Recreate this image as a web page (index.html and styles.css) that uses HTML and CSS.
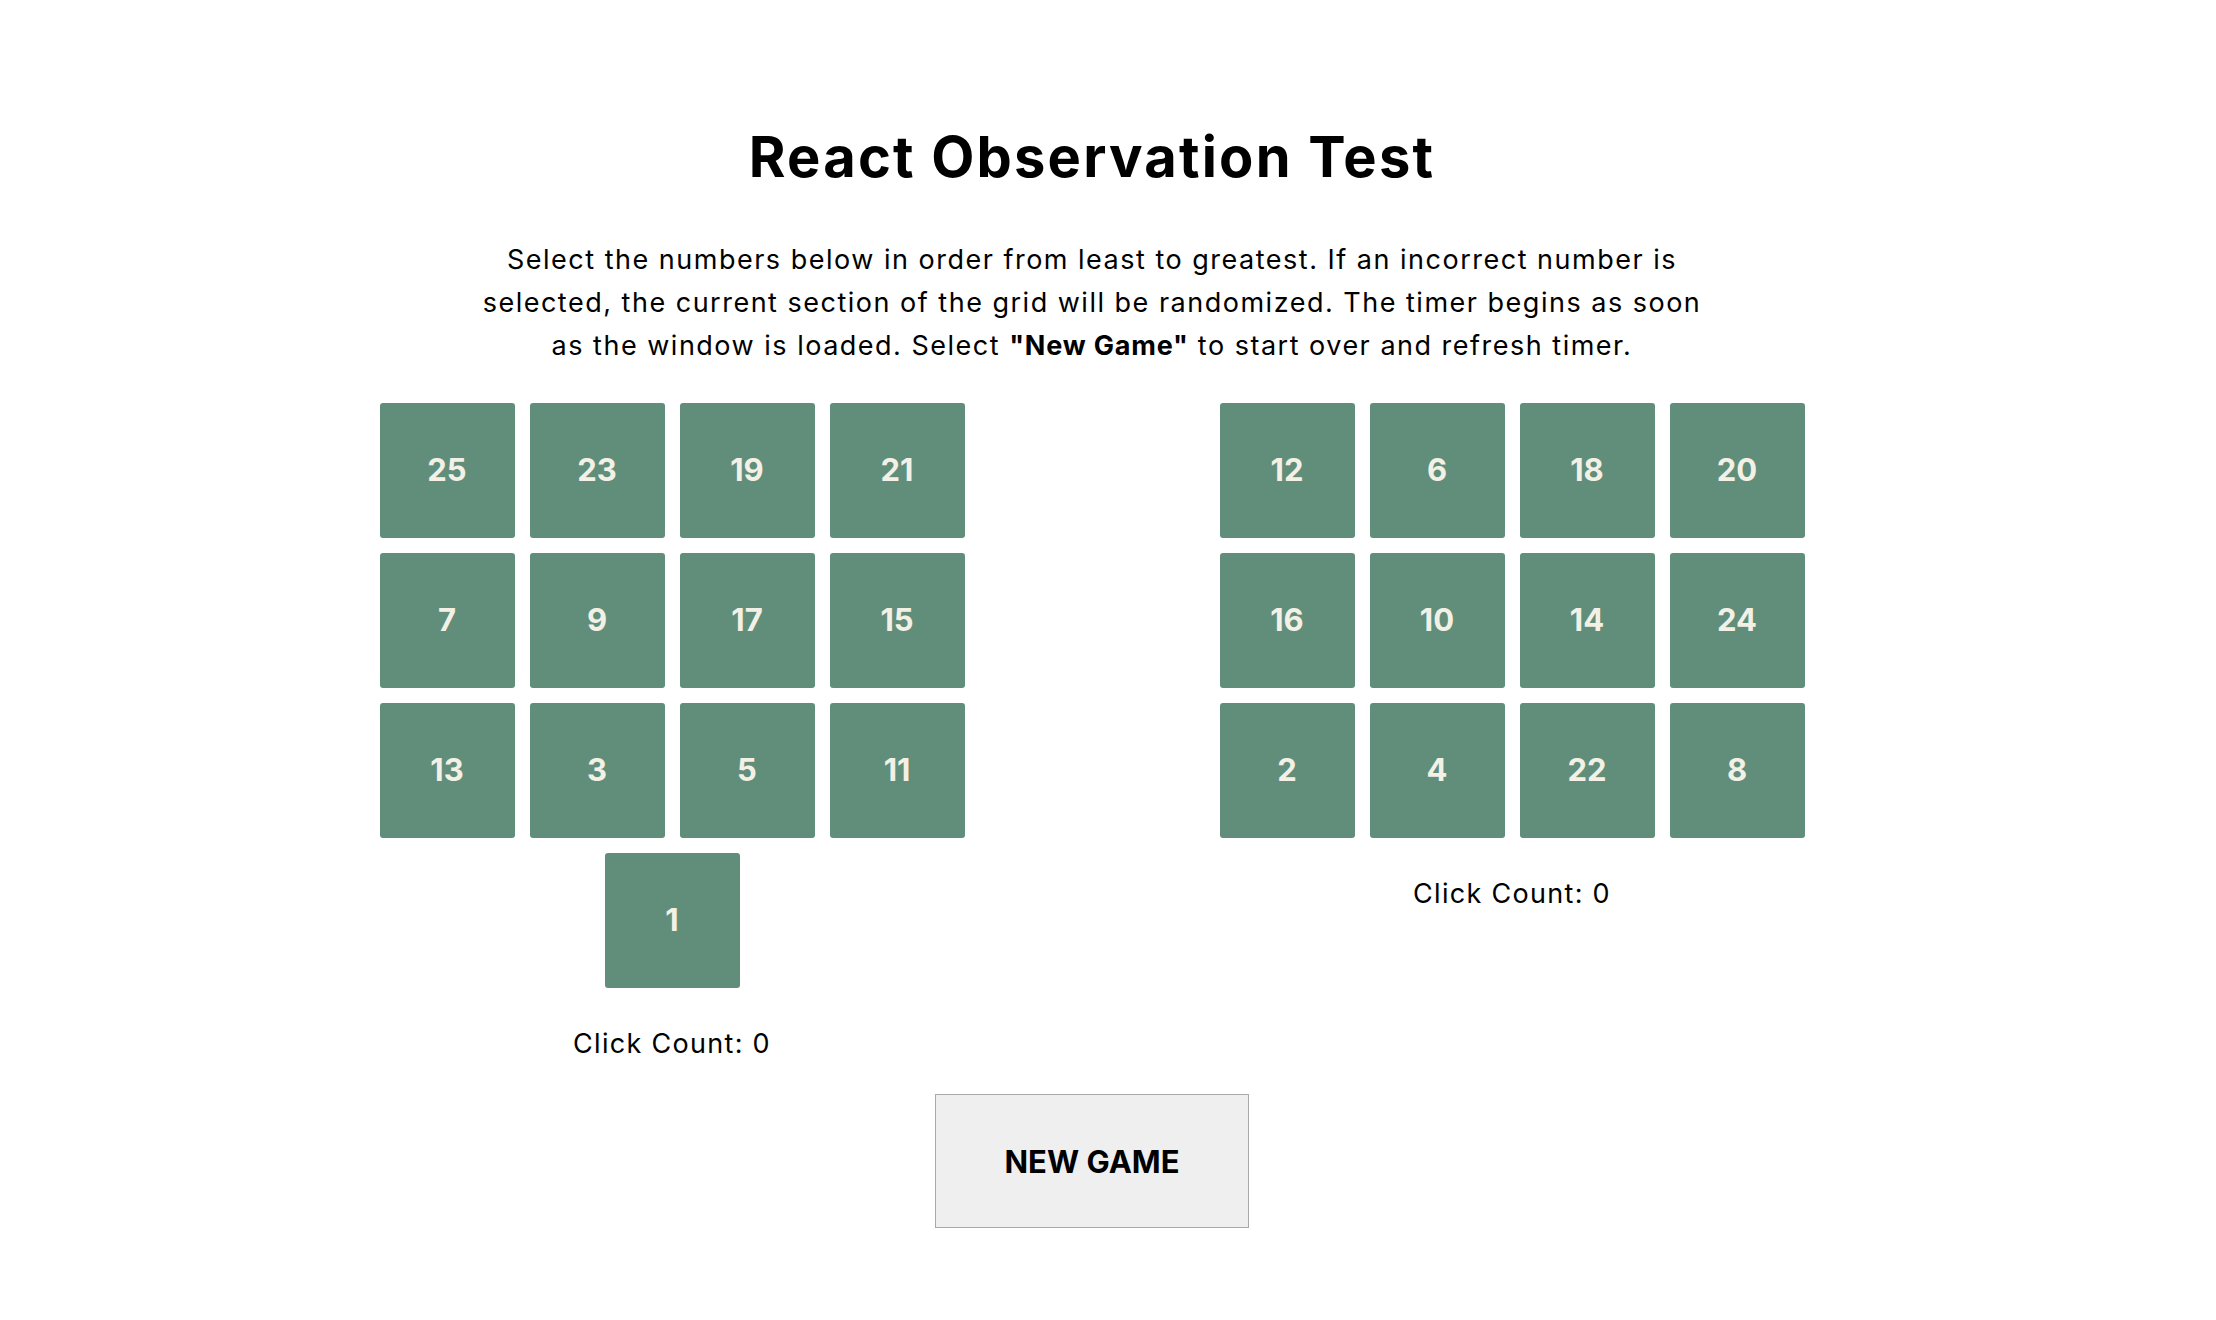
FILE: index.html
```html
<!DOCTYPE html>
<html lang="en">
<head>
<meta charset="utf-8">
<title>React Observation Test</title>
<link rel="stylesheet" href="styles.css">
</head>
<body>
<main class="page">
  <h1 class="title">React Observation Test</h1>
  <p class="intro">
    <span class="line l1">Select the numbers below in order from least to greatest. If an incorrect number is</span>
    <span class="line l2">selected, the current section of the grid will be randomized. The timer begins as soon</span>
    <span class="line l3">as the window is loaded. Select <strong>"New Game"</strong> to start over and refresh timer.</span>
  </p>
  <div class="boards">
    <section class="board">
      <div class="grid">
        <button class="tile">25</button><button class="tile">23</button><button class="tile">19</button><button class="tile">21</button>
        <button class="tile">7</button><button class="tile">9</button><button class="tile">17</button><button class="tile">15</button>
        <button class="tile">13</button><button class="tile">3</button><button class="tile">5</button><button class="tile">11</button>
        <button class="tile">1</button>
      </div>
      <p class="count">Click Count: 0</p>
    </section>
    <section class="board">
      <div class="grid">
        <button class="tile">12</button><button class="tile">6</button><button class="tile">18</button><button class="tile">20</button>
        <button class="tile">16</button><button class="tile">10</button><button class="tile">14</button><button class="tile">24</button>
        <button class="tile">2</button><button class="tile">4</button><button class="tile">22</button><button class="tile">8</button>
      </div>
      <p class="count">Click Count: 0</p>
    </section>
  </div>
  <div class="actions">
    <button class="new-game">NEW GAME</button>
  </div>
</main>
</body>
</html>
```

FILE: styles.css
```css
* { box-sizing: border-box; }

html, body {
  margin: 0;
  padding: 0;
  background: #ffffff;
}

body {
  font-family: Inter, "Noto Sans", sans-serif;
  color: #000000;
}

.page {
  width: 2184px;
  padding-top: 123px;
  display: flex;
  flex-direction: column;
  align-items: center;
}

.title {
  margin: 0;
  font-size: 56px;
  line-height: 68px;
  font-weight: 700;
  letter-spacing: 2.2px;
  text-align: center;
}

.intro {
  margin: 47px 0 0;
  font-size: 27px;
  line-height: 43px;
  font-weight: 400;
  letter-spacing: 1.5px;
  text-align: center;
  display: flex;
  flex-direction: column;
  align-items: center;
}

.intro strong { font-weight: 700; letter-spacing: 0.8px; }

.line { display: block; white-space: nowrap; }

.boards {
  margin-top: 36px;
  display: flex;
  align-items: flex-start;
  gap: 255px;
}

.board {
  width: 585px;
  display: flex;
  flex-direction: column;
  align-items: center;
}

.grid {
  width: 585px;
  display: flex;
  flex-wrap: wrap;
  justify-content: center;
  gap: 15px;
}

.tile {
  width: 135px;
  height: 135px;
  margin: 0;
  padding: 0 0 2px;
  border: none;
  border-radius: 3px;
  background: #618e7a;
  color: #f3f1e6;
  font-family: Inter, "Noto Sans", sans-serif;
  font-size: 31px;
  font-weight: 700;
  display: flex;
  align-items: center;
  justify-content: center;
}

.count {
  margin: 34px 0 0;
  font-size: 27px;
  line-height: 43px;
  letter-spacing: 1.3px;
}

.actions {
  margin-top: 29px;
  display: flex;
  justify-content: center;
}

.new-game {
  width: 314px;
  height: 134px;
  background: #efefef;
  border: 1px solid #a9a9a9;
  border-radius: 0;
  font-family: Inter, "Noto Sans", sans-serif;
  font-size: 31px;
  font-weight: 700;
  color: #000000;
  padding: 0;
}
```
